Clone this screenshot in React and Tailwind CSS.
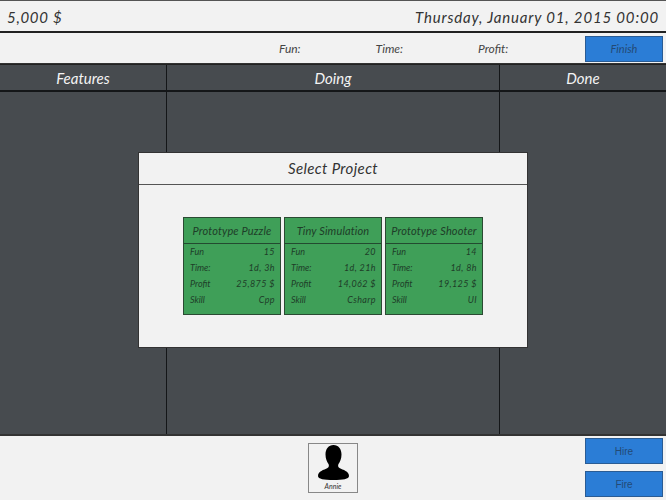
import React from "react";

const hand = "font-['Lato','Open_Sans',sans-serif] italic";

const projects = [
  { name: "Prototype Puzzle", fun: "15", time: "1d, 3h", profit: "25,875 $", skill: "Cpp" },
  { name: "Tiny Simulation", fun: "20", time: "1d, 21h", profit: "14,062 $", skill: "Csharp" },
  { name: "Prototype Shooter", fun: "14", time: "1d, 8h", profit: "19,125 $", skill: "UI" },
];

function Stat({ label, value }) {
  return (
    <div className="flex h-4 items-center justify-between">
      <span>{label}</span>
      <span className="tracking-[0.4px]">{value}</span>
    </div>
  );
}

function ProjectCard({ project }) {
  return (
    <div className="h-[98px] w-[98px] border border-[#2b4a33] bg-[#3f9f58] text-[#1e3d28]">
      <div className="flex h-[26px] items-center justify-center border-b border-[#234a30] pt-[1px] text-[11px] tracking-[0.15px]">
        {project.name}
      </div>
      <div className="flex flex-col pl-[6px] pr-[5px] text-[9px]">
        <Stat label="Fun" value={project.fun} />
        <Stat label="Time:" value={project.time} />
        <Stat label="Profit" value={project.profit} />
        <Stat label="Skill" value={project.skill} />
      </div>
    </div>
  );
}

function Column({ title, className }) {
  return (
    <div className={`flex flex-col ${className}`}>
      <div className="flex h-[27px] items-center justify-center border-b-2 border-[#141618] pt-[1px] text-[15px] text-[#f4f4f4]">
        {title}
      </div>
    </div>
  );
}

function BlueButton({ children, className }) {
  return (
    <div className={`flex h-[26px] w-[78px] items-center justify-center border border-[#2a5c94] bg-[#2b7dd6] text-[#234a75] ${className}`}>
      {children}
    </div>
  );
}

export default function App() {
  return (
    <div className={`relative flex h-[500px] w-[666px] flex-col overflow-hidden bg-[#f2f2f2] ${hand}`}>
      <div className="flex h-[33px] items-center justify-between border-t border-b-2 border-t-[#555] border-b-[#222] pl-[7px] pr-[7px] pt-[2px] text-[#333]">
        <span className="text-[15px] tracking-[0.7px]">5,000 $</span>
        <span className="text-[15px] tracking-[0.83px]">Thursday, January 01, 2015 00:00</span>
      </div>

      <div className="flex h-[31px] items-center border-b border-[#333] pt-[2px] text-[12px] text-[#444]">
        <span className="ml-[279px]">Fun:</span>
        <span className="ml-[75px]">Time:</span>
        <span className="ml-[75px]">Profit:</span>
        <BlueButton className="ml-auto mr-[3px] text-[11px]">Finish</BlueButton>
      </div>

      <div className="flex h-[370px] border-t border-[#222] bg-[#474b4f]">
        <Column title="Features" className="w-[167px] border-r border-[#141618]" />
        <Column title="Doing" className="w-[333px] border-r border-[#141618]" />
        <Column title="Done" className="flex-1" />
      </div>

      <div className="flex flex-1 items-start border-t-2 border-[#333]">
        <div className="ml-[308px] mt-[7px] flex h-[50px] w-[50px] flex-col items-center border border-[#888] bg-[#f2f2f2]">
          <svg width="31" height="35" viewBox="0 0 31 35" className="mt-[1px]">
            <path
              fill="#000"
              d="M15.500 0C10.500 0 7.500 4 7.500 9.500C7.500 13.500 9 17 10.500 19C11.200 20.500 11 22 9.500 23C6 25 0 26 0 31C0 34 6 35 15.500 35S31 34 31 31C31 26 25 25 21.500 23C20 22 19.800 20.500 20.500 19C22 17 23.500 13.500 23.500 9.500C23.500 4 20.500 0 15.500 0z"
            />
          </svg>
          <span className="mt-[2px] text-[7px] leading-[8px] text-[#333]">Annie</span>
        </div>
        <div className="ml-auto mr-[3px] mt-[2px] flex flex-col gap-[7px]">
          <BlueButton className="font-['Liberation_Sans',sans-serif] text-[10px] not-italic text-[#2f5f94]">Hire</BlueButton>
          <BlueButton className="font-['Liberation_Sans',sans-serif] text-[10px] not-italic text-[#2f5f94]">Fire</BlueButton>
        </div>
      </div>

      <div className="absolute left-[138px] top-[152px] flex h-[196px] w-[390px] flex-col border border-[#333] bg-[#f2f2f2]">
        <div className="flex h-[32px] items-center justify-center border-b border-[#555] text-[15px] tracking-[0.4px] text-[#333]">
          Select Project
        </div>
        <div className="flex justify-center gap-[3px] pt-[32px]">
          {projects.map((p) => (
            <ProjectCard key={p.name} project={p} />
          ))}
        </div>
      </div>
    </div>
  );
}
